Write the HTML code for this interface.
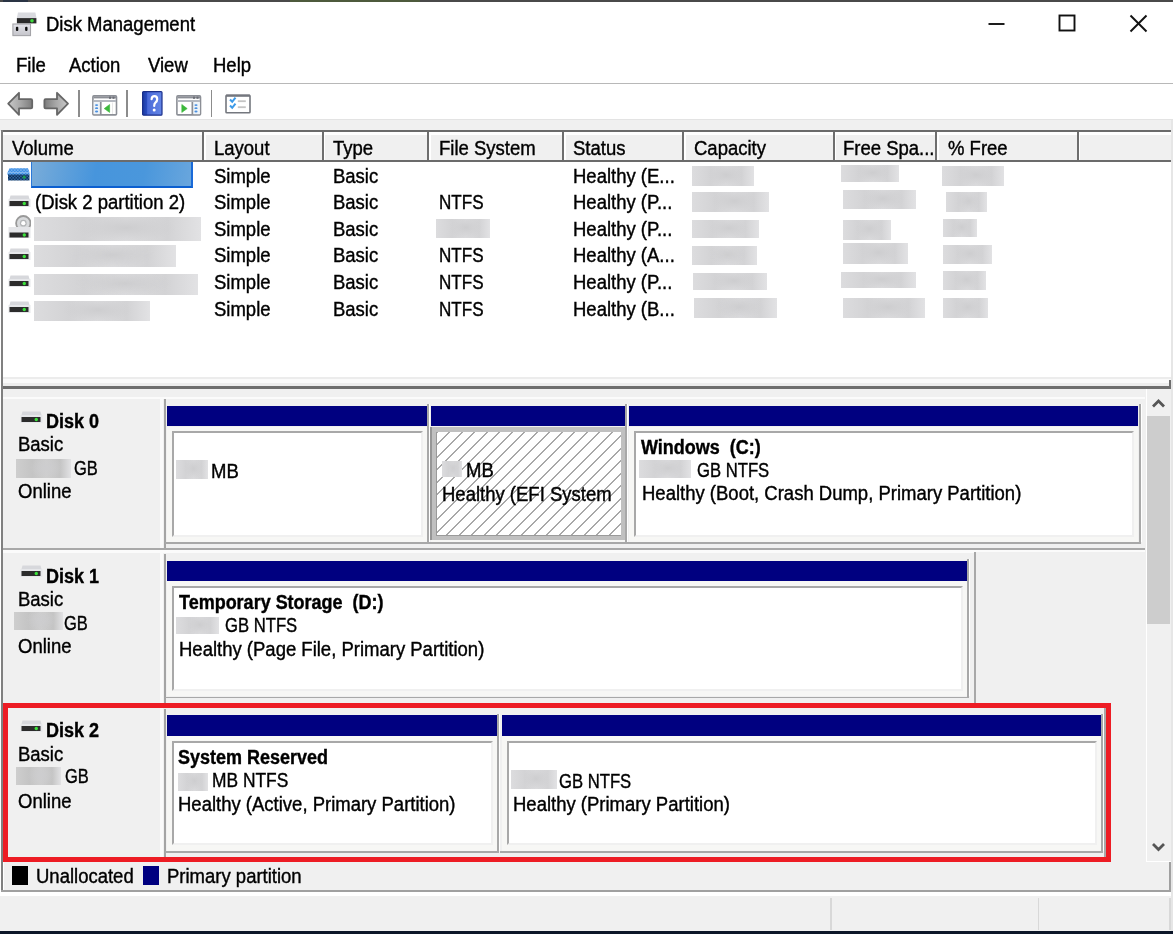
<!DOCTYPE html>
<html><head><meta charset="utf-8"><style>
html,body{margin:0;padding:0}
body{width:1173px;height:934px;position:relative;overflow:hidden;background:#fff;font-family:"Liberation Sans",sans-serif;font-size:18.5px;color:#000}
body>div,body>svg{position:absolute}
.t{line-height:20px;white-space:nowrap;font-size:19.6px;transform:scaleX(0.944);transform-origin:0 0;-webkit-text-stroke:0.4px #000}
.t.b{font-weight:bold;transform:scaleX(0.918)}
.bl{filter:blur(1.2px)}
</style></head><body>
<div style="left:0px;top:0px;width:1173px;height:1.5px;background:#4a4a4a;"></div>
<div style="left:290px;top:0px;width:130px;height:1.5px;background:#4e5a3c;"></div>
<div style="left:3px;top:0px;width:25px;height:1.5px;background:#2a3444;"></div>
<div class="t" style="left:46px;top:14.2px;">Disk Management</div>
<svg style="left:0;top:0" width="1173" height="50"><g stroke="#111" stroke-width="1.9" fill="none"><line x1="988.5" y1="24" x2="1004.5" y2="24"/><rect x="1059.5" y="15.5" width="15" height="15"/><line x1="1130.5" y1="15.5" x2="1146.5" y2="31.5"/><line x1="1146.5" y1="15.5" x2="1130.5" y2="31.5"/></g></svg>
<svg style="left:11px;top:11px" width="28" height="27" viewBox="0 0 28 27"><defs><linearGradient id="tg" x1="0" y1="0" x2="0" y2="1"><stop offset="0" stop-color="#e4e4ea"/><stop offset="1" stop-color="#c4c4ca"/></linearGradient></defs><path d="M7 1.5 H24.4 L25.5 7.2 H5.8 Z" fill="#d9dadf"/><rect x="5.9" y="7.1" width="19.5" height="5.3" fill="#2a2a2a"/><circle cx="21" cy="9.8" r="1.8" fill="#3ed83e"/><rect x="1.9" y="13" width="17.6" height="11.6" fill="url(#tg)" stroke="#a4a4a8" stroke-width="1.1"/><rect x="4.9" y="15.7" width="2.4" height="4.3" rx="1" fill="#111"/><rect x="14.1" y="15.7" width="2.4" height="4.3" rx="1" fill="#111"/></svg>
<div class="t" style="left:16px;top:54.9px;">File</div>
<div class="t" style="left:68.5px;top:54.9px;">Action</div>
<div class="t" style="left:148px;top:54.9px;">View</div>
<div class="t" style="left:213px;top:54.9px;">Help</div>
<div style="left:0px;top:82.5px;width:1173px;height:1.6px;background:#b8b8b8;"></div>
<div style="left:0px;top:119px;width:1173px;height:1px;background:#e3e3e3;"></div>
<div style="left:0px;top:120px;width:1173px;height:11px;background:#f0f0f0;"></div>
<svg style="left:6px;top:90px" width="66" height="28" viewBox="0 0 66 28"><defs><linearGradient id="ag" x1="0" y1="0" x2="1" y2="0"><stop offset="0" stop-color="#c8c8c8"/><stop offset="0.5" stop-color="#a8a8a8"/><stop offset="1" stop-color="#7c7c7c"/></linearGradient><linearGradient id="ag2" x1="1" y1="0" x2="0" y2="0"><stop offset="0" stop-color="#c8c8c8"/><stop offset="0.5" stop-color="#a8a8a8"/><stop offset="1" stop-color="#7c7c7c"/></linearGradient></defs><path d="M2.2 13.7 L13 2.8 V9.2 H25 Q26.2 9.2 26.2 10.4 V17.2 Q26.2 18.4 25 18.4 H13 V24.8 Z" fill="url(#ag)" stroke="#666" stroke-width="1.8" stroke-linejoin="round"/><path d="M62 13.7 L51 2.8 V9.2 H39.6 Q38.4 9.2 38.4 10.4 V17.2 Q38.4 18.4 39.6 18.4 H51 V24.8 Z" fill="url(#ag2)" stroke="#666" stroke-width="1.8" stroke-linejoin="round"/></svg>
<div style="left:78px;top:89.5px;width:1.8px;height:27px;background:#8c8c8c;"></div>
<div style="left:126.3px;top:89.5px;width:1.8px;height:27px;background:#8c8c8c;"></div>
<div style="left:210.7px;top:89.5px;width:1.8px;height:27px;background:#8c8c8c;"></div>
<svg style="left:91.5px;top:94.5px" width="26" height="22" viewBox="0 0 26 22"><rect x="0.9" y="0.9" width="23.6" height="19" rx="1" fill="#fff" stroke="#8c8f96" stroke-width="1.6"/><rect x="1.5" y="1.6" width="22.5" height="1.8" fill="#8c8f96"/><rect x="17" y="1.6" width="2" height="2.2" fill="#6c6f76"/><rect x="20.5" y="1.6" width="2" height="2.2" fill="#6c6f76"/><rect x="1.5" y="5" width="22.5" height="2" fill="#b4b8c0"/><rect x="1.6" y="7.2" width="6.4" height="12" fill="#eef3f8"/><rect x="7.9" y="7" width="1.7" height="13" fill="#8c8f96"/><ellipse cx="4.6" cy="10.1" rx="1.6" ry="0.9" fill="#4a90e0"/><ellipse cx="4.6" cy="13.2" rx="1.6" ry="0.9" fill="#4a90e0"/><ellipse cx="4.6" cy="16.5" rx="1.6" ry="0.9" fill="#4a90e0"/><path d="M12.2 13.6 L17.6 9.5 V17.4 Z" fill="#3cb83c" stroke="#3cb83c" stroke-width="0.6" stroke-linejoin="round"/><rect x="20" y="7.5" width="0.8" height="11.5" fill="#e4e4e4"/></svg>
<svg style="left:176px;top:94.5px" width="26" height="22" viewBox="0 0 26 22"><rect x="0.9" y="0.9" width="23.6" height="19" rx="1" fill="#fff" stroke="#8c8f96" stroke-width="1.6"/><rect x="1.5" y="1.6" width="22.5" height="1.8" fill="#8c8f96"/><rect x="17" y="1.6" width="2" height="2.2" fill="#6c6f76"/><rect x="20.5" y="1.6" width="2" height="2.2" fill="#6c6f76"/><rect x="1.5" y="5" width="22.5" height="2" fill="#b4b8c0"/><rect x="17.2" y="7.2" width="6.6" height="12" fill="#eef3f8"/><rect x="15.5" y="7" width="1.7" height="13" fill="#8c8f96"/><ellipse cx="20" cy="10.1" rx="1.6" ry="0.9" fill="#4a90e0"/><ellipse cx="20" cy="13.2" rx="1.6" ry="0.9" fill="#4a90e0"/><ellipse cx="20" cy="16.5" rx="1.6" ry="0.9" fill="#4a90e0"/><path d="M11.2 13.6 L5.8 9.5 V17.4 Z" fill="#3cb83c" stroke="#3cb83c" stroke-width="0.6" stroke-linejoin="round"/></svg>
<svg style="left:142px;top:91px" width="21" height="25" viewBox="0 0 21 25"><defs><linearGradient id="hg" x1="0" y1="0" x2="1" y2="0"><stop offset="0" stop-color="#1c3aa0"/><stop offset="0.22" stop-color="#2a4cc0"/><stop offset="0.26" stop-color="#4a6ad8"/><stop offset="1" stop-color="#6486e6"/></linearGradient></defs><rect x="0.6" y="0.6" width="19.4" height="23.6" rx="1" fill="url(#hg)" stroke="#1a2f8a" stroke-width="1.2"/><path d="M9.6 8.2 Q9.8 5.2 12.4 5.2 Q15.2 5.2 15.2 8.2 Q15.2 10.2 13.4 11.6 Q12.2 12.6 12.2 15" stroke="#fff" stroke-width="2.2" fill="none" stroke-linecap="round"/><circle cx="12.2" cy="19" r="1.5" fill="#fff"/></svg>
<svg style="left:224.5px;top:93.5px" width="26" height="20" viewBox="0 0 26 20"><rect x="1" y="1.2" width="24" height="17.6" rx="0.8" fill="#fff" stroke="#74777e" stroke-width="1.6"/><rect x="1" y="0.6" width="24" height="2.2" fill="#74777e"/><path d="M5 5.5 L7.2 7.8 L10.5 3.6" stroke="#3c9ae8" stroke-width="2" fill="none"/><path d="M5 11.5 L7.2 13.8 L10.5 9.6" stroke="#3c9ae8" stroke-width="2" fill="none"/><rect x="12.8" y="6.3" width="8" height="1.8" fill="#c4c4c4"/><rect x="12.8" y="12.3" width="8" height="1.8" fill="#c4c4c4"/></svg>
<div style="left:0.5px;top:130px;width:1170.5px;height:2px;background:#6b6b6b;"></div>
<div style="left:0.5px;top:130px;width:2px;height:762px;background:#808080;"></div>
<div style="left:2.5px;top:132px;width:1168.5px;height:3px;background:#ffffff;"></div>
<div style="left:3px;top:135px;width:1168px;height:25px;background:#f0f0f0;"></div>
<div style="left:3px;top:160px;width:1168px;height:2px;background:#6b6b6b;"></div>
<div style="left:3px;top:162px;width:1168px;height:215px;background:#ffffff;"></div>
<div style="left:1171px;top:120px;width:2px;height:814px;background:#e6e6e6;"></div>
<div style="left:202.2px;top:132px;width:2px;height:28px;background:#6e6e6e;"></div>
<div style="left:204.2px;top:132px;width:1.5px;height:28px;background:#ffffff;"></div>
<div style="left:321.5px;top:132px;width:2px;height:28px;background:#6e6e6e;"></div>
<div style="left:323.5px;top:132px;width:1.5px;height:28px;background:#ffffff;"></div>
<div style="left:427.2px;top:132px;width:2px;height:28px;background:#6e6e6e;"></div>
<div style="left:429.2px;top:132px;width:1.5px;height:28px;background:#ffffff;"></div>
<div style="left:562px;top:132px;width:2px;height:28px;background:#6e6e6e;"></div>
<div style="left:564px;top:132px;width:1.5px;height:28px;background:#ffffff;"></div>
<div style="left:682.3px;top:132px;width:2px;height:28px;background:#6e6e6e;"></div>
<div style="left:684.3px;top:132px;width:1.5px;height:28px;background:#ffffff;"></div>
<div style="left:832.8px;top:132px;width:2px;height:28px;background:#6e6e6e;"></div>
<div style="left:834.8px;top:132px;width:1.5px;height:28px;background:#ffffff;"></div>
<div style="left:935px;top:132px;width:2px;height:28px;background:#6e6e6e;"></div>
<div style="left:937px;top:132px;width:1.5px;height:28px;background:#ffffff;"></div>
<div style="left:1076.5px;top:132px;width:2px;height:28px;background:#6e6e6e;"></div>
<div style="left:1078.5px;top:132px;width:1.5px;height:28px;background:#ffffff;"></div>
<div class="t" style="left:12px;top:138.0px;">Volume</div>
<div class="t" style="left:214px;top:138.0px;">Layout</div>
<div class="t" style="left:333px;top:138.0px;">Type</div>
<div class="t" style="left:439px;top:138.0px;">File System</div>
<div class="t" style="left:573px;top:138.0px;">Status</div>
<div class="t" style="left:694px;top:138.0px;">Capacity</div>
<div class="t" style="left:843px;top:138.0px;">Free Spa...</div>
<div class="t" style="left:948px;top:138.0px;">% Free</div>
<div class="t" style="left:214px;top:165.7px;">Simple</div>
<div class="t" style="left:333px;top:165.7px;">Basic</div>
<div class="t" style="left:573px;top:165.7px;">Healthy (E...</div>
<div class="t" style="left:214px;top:192.3px;">Simple</div>
<div class="t" style="left:333px;top:192.3px;">Basic</div>
<div class="t" style="left:439px;top:192.3px;transform:scaleX(0.87);">NTFS</div>
<div class="t" style="left:573px;top:192.3px;">Healthy (P...</div>
<div class="t" style="left:214px;top:218.9px;">Simple</div>
<div class="t" style="left:333px;top:218.9px;">Basic</div>
<div class="t" style="left:573px;top:218.9px;">Healthy (P...</div>
<div class="t" style="left:214px;top:245.4px;">Simple</div>
<div class="t" style="left:333px;top:245.4px;">Basic</div>
<div class="t" style="left:439px;top:245.4px;transform:scaleX(0.87);">NTFS</div>
<div class="t" style="left:573px;top:245.4px;">Healthy (A...</div>
<div class="t" style="left:214px;top:272.0px;">Simple</div>
<div class="t" style="left:333px;top:272.0px;">Basic</div>
<div class="t" style="left:439px;top:272.0px;transform:scaleX(0.87);">NTFS</div>
<div class="t" style="left:573px;top:272.0px;">Healthy (P...</div>
<div class="t" style="left:214px;top:298.6px;">Simple</div>
<div class="t" style="left:333px;top:298.6px;">Basic</div>
<div class="t" style="left:439px;top:298.6px;transform:scaleX(0.87);">NTFS</div>
<div class="t" style="left:573px;top:298.6px;">Healthy (B...</div>
<div class="t" style="left:34.5px;top:192.3px;">(Disk 2 partition 2)</div>
<div class="bl" style="left:31px;top:162px;width:162px;height:26px;background:linear-gradient(100deg,#79acd9,#4795dc 40%,#4a97dc 70%,#69a6dd);border-left:1px solid #2a78d8;border-right:2px solid #1a6ad8;border-bottom:2px solid #0b5fd0;box-sizing:border-box;filter:blur(0.6px)"></div>
<div style="left:34px;top:217px;width:167.0px;height:24.0px;background:radial-gradient(ellipse 30% 60% at 55% 45%,#cdcdcf,transparent),linear-gradient(90deg,#dcdcde,#d3d3d5 30%,#dcdcde 55%,#d3d3d5 80%,#e2e2e4)"></div>
<div style="left:34px;top:244.5px;width:142.0px;height:22.5px;background:radial-gradient(ellipse 30% 60% at 55% 45%,#cdcdcf,transparent),linear-gradient(90deg,#dcdcde,#d3d3d5 30%,#dcdcde 55%,#d3d3d5 80%,#e2e2e4)"></div>
<div style="left:34px;top:273.5px;width:164.0px;height:21.5px;background:radial-gradient(ellipse 30% 60% at 55% 45%,#cdcdcf,transparent),linear-gradient(90deg,#dcdcde,#d3d3d5 30%,#dcdcde 55%,#d3d3d5 80%,#e2e2e4)"></div>
<div style="left:34px;top:301px;width:115.5px;height:20.0px;background:radial-gradient(ellipse 30% 60% at 55% 45%,#cdcdcf,transparent),linear-gradient(90deg,#dcdcde,#d3d3d5 30%,#dcdcde 55%,#d3d3d5 80%,#e2e2e4)"></div>
<div style="left:436px;top:219px;width:54.0px;height:19.0px;background:radial-gradient(ellipse 30% 60% at 55% 45%,#cdcdcf,transparent),linear-gradient(90deg,#dcdcde,#d3d3d5 30%,#dcdcde 55%,#d3d3d5 80%,#e2e2e4)"></div>
<div style="left:692px;top:166px;width:62.0px;height:19.5px;background:radial-gradient(ellipse 30% 60% at 55% 45%,#cdcdcf,transparent),linear-gradient(90deg,#dcdcde,#d3d3d5 30%,#dcdcde 55%,#d3d3d5 80%,#e2e2e4)"></div>
<div style="left:692px;top:191.5px;width:76.5px;height:20.0px;background:radial-gradient(ellipse 30% 60% at 55% 45%,#cdcdcf,transparent),linear-gradient(90deg,#dcdcde,#d3d3d5 30%,#dcdcde 55%,#d3d3d5 80%,#e2e2e4)"></div>
<div style="left:692px;top:219.5px;width:66.5px;height:18.0px;background:radial-gradient(ellipse 30% 60% at 55% 45%,#cdcdcf,transparent),linear-gradient(90deg,#dcdcde,#d3d3d5 30%,#dcdcde 55%,#d3d3d5 80%,#e2e2e4)"></div>
<div style="left:692px;top:245.5px;width:64.5px;height:19.5px;background:radial-gradient(ellipse 30% 60% at 55% 45%,#cdcdcf,transparent),linear-gradient(90deg,#dcdcde,#d3d3d5 30%,#dcdcde 55%,#d3d3d5 80%,#e2e2e4)"></div>
<div style="left:693px;top:272.5px;width:74.0px;height:17.0px;background:radial-gradient(ellipse 30% 60% at 55% 45%,#cdcdcf,transparent),linear-gradient(90deg,#dcdcde,#d3d3d5 30%,#dcdcde 55%,#d3d3d5 80%,#e2e2e4)"></div>
<div style="left:694px;top:297.5px;width:83.0px;height:20.5px;background:radial-gradient(ellipse 30% 60% at 55% 45%,#cdcdcf,transparent),linear-gradient(90deg,#dcdcde,#d3d3d5 30%,#dcdcde 55%,#d3d3d5 80%,#e2e2e4)"></div>
<div style="left:841px;top:164.5px;width:58.0px;height:17.0px;background:radial-gradient(ellipse 30% 60% at 55% 45%,#cdcdcf,transparent),linear-gradient(90deg,#dcdcde,#d3d3d5 30%,#dcdcde 55%,#d3d3d5 80%,#e2e2e4)"></div>
<div style="left:843px;top:190px;width:73.0px;height:18.5px;background:radial-gradient(ellipse 30% 60% at 55% 45%,#cdcdcf,transparent),linear-gradient(90deg,#dcdcde,#d3d3d5 30%,#dcdcde 55%,#d3d3d5 80%,#e2e2e4)"></div>
<div style="left:843px;top:219.5px;width:47.5px;height:20.0px;background:radial-gradient(ellipse 30% 60% at 55% 45%,#cdcdcf,transparent),linear-gradient(90deg,#dcdcde,#d3d3d5 30%,#dcdcde 55%,#d3d3d5 80%,#e2e2e4)"></div>
<div style="left:843px;top:243px;width:65.0px;height:20.5px;background:radial-gradient(ellipse 30% 60% at 55% 45%,#cdcdcf,transparent),linear-gradient(90deg,#dcdcde,#d3d3d5 30%,#dcdcde 55%,#d3d3d5 80%,#e2e2e4)"></div>
<div style="left:841px;top:272px;width:75.0px;height:15.5px;background:radial-gradient(ellipse 30% 60% at 55% 45%,#cdcdcf,transparent),linear-gradient(90deg,#dcdcde,#d3d3d5 30%,#dcdcde 55%,#d3d3d5 80%,#e2e2e4)"></div>
<div style="left:843px;top:297.5px;width:82.0px;height:20.0px;background:radial-gradient(ellipse 30% 60% at 55% 45%,#cdcdcf,transparent),linear-gradient(90deg,#dcdcde,#d3d3d5 30%,#dcdcde 55%,#d3d3d5 80%,#e2e2e4)"></div>
<div style="left:942px;top:166px;width:61.5px;height:19.5px;background:radial-gradient(ellipse 30% 60% at 55% 45%,#cdcdcf,transparent),linear-gradient(90deg,#dcdcde,#d3d3d5 30%,#dcdcde 55%,#d3d3d5 80%,#e2e2e4)"></div>
<div style="left:945.5px;top:191.5px;width:41.5px;height:20.5px;background:radial-gradient(ellipse 30% 60% at 55% 45%,#cdcdcf,transparent),linear-gradient(90deg,#dcdcde,#d3d3d5 30%,#dcdcde 55%,#d3d3d5 80%,#e2e2e4)"></div>
<div style="left:943px;top:219px;width:34.0px;height:18.0px;background:radial-gradient(ellipse 30% 60% at 55% 45%,#cdcdcf,transparent),linear-gradient(90deg,#dcdcde,#d3d3d5 30%,#dcdcde 55%,#d3d3d5 80%,#e2e2e4)"></div>
<div style="left:943px;top:244.5px;width:49.0px;height:19.0px;background:radial-gradient(ellipse 30% 60% at 55% 45%,#cdcdcf,transparent),linear-gradient(90deg,#dcdcde,#d3d3d5 30%,#dcdcde 55%,#d3d3d5 80%,#e2e2e4)"></div>
<div style="left:943px;top:271px;width:43.0px;height:19.0px;background:radial-gradient(ellipse 30% 60% at 55% 45%,#cdcdcf,transparent),linear-gradient(90deg,#dcdcde,#d3d3d5 30%,#dcdcde 55%,#d3d3d5 80%,#e2e2e4)"></div>
<div style="left:943px;top:298px;width:45.0px;height:19.5px;background:radial-gradient(ellipse 30% 60% at 55% 45%,#cdcdcf,transparent),linear-gradient(90deg,#dcdcde,#d3d3d5 30%,#dcdcde 55%,#d3d3d5 80%,#e2e2e4)"></div>
<svg style="left:8px;top:195px" width="23" height="13" viewBox="0 0 23 13"><path d="M2.5 0.5 H20.5 L21.5 4 H1.5 Z" fill="#d7d8dc"/><rect x="0.5" y="4" width="22" height="8" fill="#e6e7ea"/><rect x="1.5" y="6" width="19" height="5" fill="#2c2c2c"/><circle cx="16.3" cy="8.5" r="1.7" fill="#3be23b"/></svg>
<svg style="left:8px;top:214px" width="23" height="25" viewBox="0 0 23 25"><circle cx="15.3" cy="9.2" r="7.2" fill="#d8dadc" stroke="#999" stroke-width="1.8"/><circle cx="15.3" cy="9.2" r="3.4" fill="#b4b6b8"/><circle cx="15.3" cy="9.2" r="2.1" fill="#fff"/><rect x="0.5" y="13" width="22" height="11" fill="#e4e5e8"/><rect x="1.5" y="18.5" width="19" height="5" fill="#2c2c2c"/><circle cx="16.3" cy="21" r="1.7" fill="#3be23b"/></svg>
<svg style="left:8px;top:248.2px" width="23" height="13" viewBox="0 0 23 13"><path d="M2.5 0.5 H20.5 L21.5 4 H1.5 Z" fill="#d7d8dc"/><rect x="0.5" y="4" width="22" height="8" fill="#e6e7ea"/><rect x="1.5" y="6" width="19" height="5" fill="#2c2c2c"/><circle cx="16.3" cy="8.5" r="1.7" fill="#3be23b"/></svg>
<svg style="left:8px;top:274.8px" width="23" height="13" viewBox="0 0 23 13"><path d="M2.5 0.5 H20.5 L21.5 4 H1.5 Z" fill="#d7d8dc"/><rect x="0.5" y="4" width="22" height="8" fill="#e6e7ea"/><rect x="1.5" y="6" width="19" height="5" fill="#2c2c2c"/><circle cx="16.3" cy="8.5" r="1.7" fill="#3be23b"/></svg>
<svg style="left:8px;top:301.4px" width="23" height="13" viewBox="0 0 23 13"><path d="M2.5 0.5 H20.5 L21.5 4 H1.5 Z" fill="#d7d8dc"/><rect x="0.5" y="4" width="22" height="8" fill="#e6e7ea"/><rect x="1.5" y="6" width="19" height="5" fill="#2c2c2c"/><circle cx="16.3" cy="8.5" r="1.7" fill="#3be23b"/></svg>
<svg style="left:7px;top:167px" width="24" height="16" viewBox="0 0 24 16"><defs><pattern id="dp" width="3.1" height="3.1" patternUnits="userSpaceOnUse"><rect width="3.1" height="3.1" fill="#c6def5"/><circle cx="0" cy="0" r="1.2" fill="#3a8ee6"/><circle cx="3.1" cy="0" r="1.2" fill="#3a8ee6"/><circle cx="0" cy="3.1" r="1.2" fill="#3a8ee6"/><circle cx="3.1" cy="3.1" r="1.2" fill="#3a8ee6"/><circle cx="1.55" cy="1.55" r="1.2" fill="#3a8ee6"/></pattern><pattern id="dp2" width="3.1" height="3.1" patternUnits="userSpaceOnUse"><rect width="3.1" height="3.1" fill="#4a98e4"/><circle cx="0" cy="0" r="1.1" fill="#0e2d55"/><circle cx="3.1" cy="0" r="1.1" fill="#0e2d55"/><circle cx="0" cy="3.1" r="1.1" fill="#0e2d55"/><circle cx="3.1" cy="3.1" r="1.1" fill="#0e2d55"/><circle cx="1.55" cy="1.55" r="1.1" fill="#0e2d55"/></pattern></defs><path d="M2.5 1.2 H21 L22.6 5.5 H0.5 Z" fill="url(#dp)"/><rect x="0.5" y="5.5" width="22" height="2.5" fill="url(#dp)"/><rect x="1" y="7.5" width="21.5" height="6" fill="url(#dp2)"/><circle cx="17.2" cy="10.2" r="1.6" fill="#1a9a50"/></svg>
<div style="left:3px;top:377px;width:1168px;height:2px;background:#ececec;"></div>
<div style="left:2.5px;top:379px;width:1168.5px;height:4px;background:#fafafa;"></div>
<div style="left:3px;top:383px;width:1168px;height:3px;background:#ededed;"></div>
<div style="left:2.5px;top:386px;width:1168.5px;height:2.6px;background:#6e6e6e;"></div>
<div style="left:1169px;top:380px;width:2px;height:8px;background:#6e6e6e;"></div>
<div style="left:3px;top:389px;width:1143px;height:473px;background:#f0f0f0;"></div>
<div style="left:1146px;top:389px;width:1px;height:472px;background:#ffffff;"></div>
<div style="left:1147px;top:389px;width:24px;height:472px;background:#f0f0f0;"></div>
<div style="left:1146.8px;top:415.7px;width:23.2px;height:208.8px;background:#cdcdcd;"></div>
<svg style="left:1147px;top:392px" width="24" height="470"><path d="M6 14.5 L11.5 9 L17 14.5" stroke="#555" stroke-width="2.8" fill="none"/><path d="M6 452 L11.5 457.5 L17 452" stroke="#555" stroke-width="2.8" fill="none"/></svg>
<div style="left:3px;top:397.0px;width:1142px;height:1.5px;background:#fbfbfb;"></div>
<div style="left:160px;top:397.0px;width:3px;height:151px;background:#fafafa;"></div>
<div style="left:163.5px;top:399.0px;width:2px;height:151px;background:#a4a4a4;"></div>
<svg style="left:20px;top:410.5px" width="23" height="13" viewBox="0 0 23 13"><path d="M2.5 0.5 H20.5 L21.5 4 H1.5 Z" fill="#d7d8dc"/><rect x="0.5" y="4" width="22" height="8" fill="#e6e7ea"/><rect x="1.5" y="6" width="19" height="5" fill="#2c2c2c"/><circle cx="16.3" cy="8.5" r="1.7" fill="#3be23b"/></svg>
<div class="t b" style="left:46px;top:410.7px;">Disk 0</div>
<div class="t" style="left:17.5px;top:434.2px;">Basic</div>
<div class="t" style="left:17.5px;top:481.0px;">Online</div>
<div style="left:3px;top:548.0px;width:1142px;height:2px;background:#a8a8a8;"></div>
<div style="left:3px;top:550.0px;width:1142px;height:2px;background:#fbfbfb;"></div>
<div style="left:167px;top:405.8px;width:259.5px;height:20.5px;background:#000080;"></div>
<div style="left:167px;top:426.5px;width:259.5px;height:115.5px;background:#f7f7f5;"></div>
<div style="left:426.5px;top:404px;width:2px;height:139.5px;background:#a8a8a8;"></div>
<div style="left:428.5px;top:404px;width:1px;height:138px;background:#ffffff;"></div>
<div style="left:165px;top:542px;width:263.5px;height:1.6px;background:#a8a8a8;"></div>
<div style="left:172px;top:431px;width:250.5px;height:105.5px;background:#fff;border-left:2px solid #a8a8a8;border-top:2px solid #a8a8a8;border-right:2px solid #f0f0f0;border-bottom:2px solid #f0f0f0;box-sizing:border-box"></div>
<div style="left:431px;top:405.8px;width:194px;height:20.5px;background:#000080;"></div>
<div style="left:431px;top:426.5px;width:194px;height:115.5px;background:#f7f7f5;"></div>
<div style="left:625px;top:404px;width:2px;height:139.5px;background:#a8a8a8;"></div>
<div style="left:627px;top:404px;width:1px;height:138px;background:#ffffff;"></div>
<div style="left:429px;top:542px;width:198px;height:1.6px;background:#a8a8a8;"></div>
<div style="left:430px;top:426.5px;width:195px;height:113.5px;background:#c0c0c0;"></div>
<div style="left:430px;top:426.5px;width:1.5px;height:113.5px;background:#969696;"></div>
<div style="left:436px;top:432.3px;width:184.5px;height:103.40000000000003px;background:#fff repeating-linear-gradient(-45deg,#fff 0 7.5px,#a8a8a8 7.5px 8.84px);border-left:1.5px solid #9a9a9a;border-bottom:1.5px solid #9a9a9a;box-sizing:border-box"></div>
<div style="left:629.4px;top:405.8px;width:509.1px;height:20.5px;background:#000080;"></div>
<div style="left:629.4px;top:426.5px;width:509.1px;height:115.5px;background:#f7f7f5;"></div>
<div style="left:1138.5px;top:404px;width:2px;height:139.5px;background:#a8a8a8;"></div>
<div style="left:1140.5px;top:404px;width:1px;height:138px;background:#ffffff;"></div>
<div style="left:627.4px;top:542px;width:513.1px;height:1.6px;background:#a8a8a8;"></div>
<div style="left:634.4px;top:431px;width:500.1px;height:105.5px;background:#fff;border-left:2px solid #a8a8a8;border-top:2px solid #a8a8a8;border-right:2px solid #f0f0f0;border-bottom:2px solid #f0f0f0;box-sizing:border-box"></div>
<div style="left:16px;top:459px;width:55.0px;height:19.0px;background:radial-gradient(ellipse 30% 60% at 55% 45%,#cdcdcf,transparent),linear-gradient(90deg,#cecece,#c4c4c4 30%,#cecece 55%,#c4c4c4 80%,#e2e2e4)"></div>
<div class="t" style="left:74px;top:457.8px;transform:scaleX(0.84);">GB</div>
<div style="left:176px;top:460px;width:32.0px;height:18.7px;background:radial-gradient(ellipse 30% 60% at 55% 45%,#cdcdcf,transparent),linear-gradient(90deg,#dcdcde,#d3d3d5 30%,#dcdcde 55%,#d3d3d5 80%,#e2e2e4)"></div>
<div class="t" style="left:211px;top:460.8px;">MB</div>
<div style="left:442px;top:460.5px;width:19.5px;height:16.7px;background:radial-gradient(ellipse 30% 60% at 55% 45%,#cdcdcf,transparent),linear-gradient(90deg,#dcdcde,#d3d3d5 30%,#dcdcde 55%,#d3d3d5 80%,#e2e2e4)"></div>
<div class="t" style="left:466px;top:460.4px;">MB</div>
<div style="left:442px;top:480px;width:176px;height:30px;overflow:hidden"><div class="t" style="position:absolute;left:0;top:3.9px">Healthy (EFI System Partition)</div></div>
<div class="t b" style="left:640.5px;top:437.3px;">Windows&nbsp; (C:)</div>
<div style="left:639px;top:460.3px;width:51.5px;height:18.2px;background:radial-gradient(ellipse 30% 60% at 55% 45%,#cdcdcf,transparent),linear-gradient(90deg,#dcdcde,#d3d3d5 30%,#dcdcde 55%,#d3d3d5 80%,#e2e2e4)"></div>
<div class="t" style="left:697px;top:459.5px;transform:scaleX(0.85);">GB NTFS</div>
<div class="t" style="left:641.5px;top:482.9px;">Healthy (Boot, Crash Dump, Primary Partition)</div>
<div style="left:3px;top:551.8px;width:973px;height:1.5px;background:#fbfbfb;"></div>
<div style="left:160px;top:551.8px;width:3px;height:151px;background:#fafafa;"></div>
<div style="left:163.5px;top:553.8px;width:2px;height:151px;background:#a4a4a4;"></div>
<svg style="left:20px;top:565.3px" width="23" height="13" viewBox="0 0 23 13"><path d="M2.5 0.5 H20.5 L21.5 4 H1.5 Z" fill="#d7d8dc"/><rect x="0.5" y="4" width="22" height="8" fill="#e6e7ea"/><rect x="1.5" y="6" width="19" height="5" fill="#2c2c2c"/><circle cx="16.3" cy="8.5" r="1.7" fill="#3be23b"/></svg>
<div class="t b" style="left:46px;top:565.5px;">Disk 1</div>
<div class="t" style="left:17.5px;top:589.0px;">Basic</div>
<div class="t" style="left:17.5px;top:635.8px;">Online</div>
<div style="left:3px;top:702.8px;width:973px;height:2px;background:#a8a8a8;"></div>
<div style="left:3px;top:704.8px;width:973px;height:2px;background:#fbfbfb;"></div>
<div style="left:974px;top:552.0999999999999px;width:2px;height:152px;background:#a8a8a8;"></div>
<div style="left:167px;top:560.6px;width:800px;height:20.5px;background:#000080;"></div>
<div style="left:167px;top:581.3px;width:800px;height:115.20000000000005px;background:#f7f7f5;"></div>
<div style="left:967px;top:558.8px;width:2px;height:139.20000000000005px;background:#a8a8a8;"></div>
<div style="left:969px;top:558.8px;width:1px;height:137.70000000000005px;background:#ffffff;"></div>
<div style="left:165px;top:696.5px;width:804px;height:1.6px;background:#a8a8a8;"></div>
<div style="left:172px;top:585.8px;width:791px;height:105.20000000000005px;background:#fff;border-left:2px solid #a8a8a8;border-top:2px solid #a8a8a8;border-right:2px solid #f0f0f0;border-bottom:2px solid #f0f0f0;box-sizing:border-box"></div>
<div style="left:13.6px;top:611.7px;width:49.4px;height:18.7px;background:radial-gradient(ellipse 30% 60% at 55% 45%,#cdcdcf,transparent),linear-gradient(90deg,#cecece,#c4c4c4 30%,#cecece 55%,#c4c4c4 80%,#e2e2e4)"></div>
<div class="t" style="left:64px;top:612.6px;transform:scaleX(0.84);">GB</div>
<div class="t b" style="left:179px;top:592.2px;">Temporary Storage&nbsp; (D:)</div>
<div style="left:176px;top:616.8px;width:42.5px;height:17.2px;background:radial-gradient(ellipse 30% 60% at 55% 45%,#cdcdcf,transparent),linear-gradient(90deg,#dcdcde,#d3d3d5 30%,#dcdcde 55%,#d3d3d5 80%,#e2e2e4)"></div>
<div class="t" style="left:225px;top:615.2px;transform:scaleX(0.85);">GB NTFS</div>
<div class="t" style="left:179px;top:639.2px;">Healthy (Page File, Primary Partition)</div>
<div style="left:3px;top:706.6px;width:1103px;height:1.5px;background:#fbfbfb;"></div>
<div style="left:160px;top:706.6px;width:3px;height:151px;background:#fafafa;"></div>
<div style="left:163.5px;top:708.6px;width:2px;height:151px;background:#a4a4a4;"></div>
<svg style="left:20px;top:720.1px" width="23" height="13" viewBox="0 0 23 13"><path d="M2.5 0.5 H20.5 L21.5 4 H1.5 Z" fill="#d7d8dc"/><rect x="0.5" y="4" width="22" height="8" fill="#e6e7ea"/><rect x="1.5" y="6" width="19" height="5" fill="#2c2c2c"/><circle cx="16.3" cy="8.5" r="1.7" fill="#3be23b"/></svg>
<div class="t b" style="left:46px;top:720.3px;">Disk 2</div>
<div class="t" style="left:17.5px;top:743.8px;">Basic</div>
<div class="t" style="left:17.5px;top:790.6px;">Online</div>
<div style="left:3px;top:857.6px;width:1103px;height:2px;background:#a8a8a8;"></div>
<div style="left:3px;top:859.6px;width:1103px;height:2px;background:#fbfbfb;"></div>
<div style="left:1104px;top:706.9000000000001px;width:2px;height:152px;background:#a8a8a8;"></div>
<div style="left:167px;top:715.4000000000001px;width:330px;height:20.5px;background:#000080;"></div>
<div style="left:167px;top:736.1px;width:330px;height:114.89999999999998px;background:#f7f7f5;"></div>
<div style="left:497px;top:713.6px;width:2px;height:138.89999999999998px;background:#a8a8a8;"></div>
<div style="left:499px;top:713.6px;width:1px;height:137.39999999999998px;background:#ffffff;"></div>
<div style="left:165px;top:851px;width:334px;height:1.6px;background:#a8a8a8;"></div>
<div style="left:172px;top:740.6px;width:321px;height:104.89999999999998px;background:#fff;border-left:2px solid #a8a8a8;border-top:2px solid #a8a8a8;border-right:2px solid #f0f0f0;border-bottom:2px solid #f0f0f0;box-sizing:border-box"></div>
<div style="left:501.5px;top:715.4000000000001px;width:599.8px;height:20.5px;background:#000080;"></div>
<div style="left:501.5px;top:736.1px;width:599.8px;height:114.89999999999998px;background:#f7f7f5;"></div>
<div style="left:1101.3px;top:713.6px;width:2px;height:138.89999999999998px;background:#a8a8a8;"></div>
<div style="left:1103.3px;top:713.6px;width:1px;height:137.39999999999998px;background:#ffffff;"></div>
<div style="left:499.5px;top:851px;width:603.8px;height:1.6px;background:#a8a8a8;"></div>
<div style="left:506.5px;top:740.6px;width:590.8px;height:104.89999999999998px;background:#fff;border-left:2px solid #a8a8a8;border-top:2px solid #a8a8a8;border-right:2px solid #f0f0f0;border-bottom:2px solid #f0f0f0;box-sizing:border-box"></div>
<div style="left:16px;top:767px;width:45.0px;height:18.0px;background:radial-gradient(ellipse 30% 60% at 55% 45%,#cdcdcf,transparent),linear-gradient(90deg,#cecece,#c4c4c4 30%,#cecece 55%,#c4c4c4 80%,#e2e2e4)"></div>
<div class="t" style="left:64.6px;top:766.2px;transform:scaleX(0.84);">GB</div>
<div class="t b" style="left:178px;top:746.7px;">System Reserved</div>
<div style="left:178px;top:773px;width:29.5px;height:18.0px;background:radial-gradient(ellipse 30% 60% at 55% 45%,#cdcdcf,transparent),linear-gradient(90deg,#dcdcde,#d3d3d5 30%,#dcdcde 55%,#d3d3d5 80%,#e2e2e4)"></div>
<div class="t" style="left:212px;top:769.7px;transform:scaleX(0.887);">MB NTFS</div>
<div class="t" style="left:178px;top:794.0px;">Healthy (Active, Primary Partition)</div>
<div style="left:511px;top:770px;width:46.0px;height:18.7px;background:radial-gradient(ellipse 30% 60% at 55% 45%,#cdcdcf,transparent),linear-gradient(90deg,#dcdcde,#d3d3d5 30%,#dcdcde 55%,#d3d3d5 80%,#e2e2e4)"></div>
<div class="t" style="left:558.7px;top:770.8px;transform:scaleX(0.85);">GB NTFS</div>
<div class="t" style="left:512.5px;top:794.2px;">Healthy (Primary Partition)</div>
<div style="left:2.6px;top:702.8px;width:1108px;height:159.1px;border:5px solid #ed1c24;box-sizing:border-box"></div>
<div style="left:2.5px;top:862px;width:1168px;height:28.5px;background:#f0f0f0;"></div>
<div style="left:2.5px;top:862px;width:1.8px;height:28.5px;background:#ffffff;"></div>
<div style="left:0.5px;top:890.3px;width:1170.5px;height:1.6px;background:#a0a0a0;"></div>
<div style="left:1169px;top:862px;width:2px;height:30px;background:#a0a0a0;"></div>
<div style="left:12px;top:866px;width:16.2px;height:19.3px;background:#000000;"></div>
<div class="t" style="left:36px;top:866.2px;">Unallocated</div>
<div style="left:143px;top:866px;width:16.2px;height:19.3px;background:#000080;"></div>
<div class="t" style="left:167px;top:866.2px;">Primary partition</div>
<div style="left:0px;top:892px;width:1171px;height:3.5px;background:#ffffff;"></div>
<div style="left:0px;top:895.5px;width:1171px;height:35px;background:#f0f0f0;"></div>
<div style="left:830.3px;top:898px;width:1.5px;height:32px;background:#d8d8d8;"></div>
<div style="left:1037.5px;top:898px;width:1.5px;height:32px;background:#d8d8d8;"></div>
<div style="left:1169px;top:898px;width:1.5px;height:32px;background:#d8d8d8;"></div>
<div style="left:0px;top:930.5px;width:1173px;height:4px;background:#0c1628;"></div>
</body></html>
